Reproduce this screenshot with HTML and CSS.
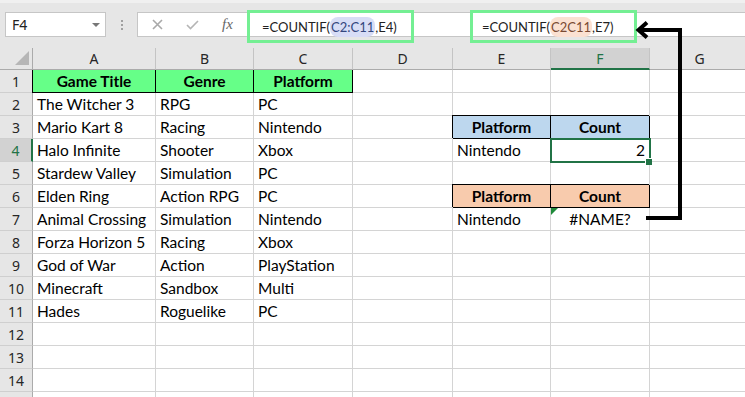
FILE: index.html
```html
<!DOCTYPE html>
<html lang="en">
<head>
  <meta charset="UTF-8" />
  <meta name="viewport" content="width=device-width, initial-scale=1.0"/>
  <title>COUNTIF - #NAME? error</title>
  <link rel="stylesheet" href="styles.css">
</head>
<body>
  <div class="window">
    <div class="toolbar">
      <div class="name-box"><span>F4</span><span class="caret"></span></div>
      <div class="grip"><i></i><i></i><i></i></div>
      <div class="formula-bar">
        <span class="fb-btn cancel">
          <svg width="11" height="11" viewBox="0 0 11 11"><path d="M1 1L10 10M10 1L1 10" /></svg>
        </span>
        <span class="fb-btn enter">
          <svg width="13" height="10" viewBox="0 0 13 10"><path d="M1 5L4.5 8.5L12 1" /></svg>
        </span>
        <span class="fb-btn fx">fx</span>
        <span class="callout">=COUNTIF(<span class="ref ref-blue">C2:C11</span>,E4)</span>
        <span class="callout callout-wrong">=COUNTIF(<span class="ref ref-orange">C2C11</span>,E7)</span>
      </div>
    </div>

    <div class="sheet">
      <div class="row head">
        <div class="corner"></div>
        <div class="col-h">A</div>
        <div class="col-h">B</div>
        <div class="col-h">C</div>
        <div class="col-h">D</div>
        <div class="col-h">E</div>
        <div class="col-h sel">F</div>
        <div class="col-h">G</div>
      </div>
      <div class="row">
        <div class="row-h">1</div>
        <div class="cell th green">Game Title</div>
        <div class="cell th green">Genre</div>
        <div class="cell th green">Platform</div>
        <div class="cell"></div><div class="cell"></div><div class="cell"></div><div class="cell"></div>
      </div>
      <div class="row">
        <div class="row-h">2</div>
        <div class="cell">The Witcher 3</div>
        <div class="cell">RPG</div>
        <div class="cell">PC</div>
        <div class="cell"></div><div class="cell"></div><div class="cell"></div><div class="cell"></div>
      </div>
      <div class="row">
        <div class="row-h">3</div>
        <div class="cell">Mario Kart 8</div>
        <div class="cell">Racing</div>
        <div class="cell">Nintendo</div>
        <div class="cell"></div>
        <div class="cell th blue">Platform</div>
        <div class="cell th blue">Count</div>
        <div class="cell"></div>
      </div>
      <div class="row">
        <div class="row-h sel">4</div>
        <div class="cell">Halo Infinite</div>
        <div class="cell">Shooter</div>
        <div class="cell">Xbox</div>
        <div class="cell"></div>
        <div class="cell">Nintendo</div>
        <div class="cell num active">2</div>
        <div class="cell"></div>
      </div>
      <div class="row">
        <div class="row-h">5</div>
        <div class="cell">Stardew Valley</div>
        <div class="cell">Simulation</div>
        <div class="cell">PC</div>
        <div class="cell"></div><div class="cell"></div><div class="cell"></div><div class="cell"></div>
      </div>
      <div class="row">
        <div class="row-h">6</div>
        <div class="cell">Elden Ring</div>
        <div class="cell">Action RPG</div>
        <div class="cell">PC</div>
        <div class="cell"></div>
        <div class="cell th peach">Platform</div>
        <div class="cell th peach">Count</div>
        <div class="cell"></div>
      </div>
      <div class="row">
        <div class="row-h">7</div>
        <div class="cell">Animal Crossing</div>
        <div class="cell">Simulation</div>
        <div class="cell">Nintendo</div>
        <div class="cell"></div>
        <div class="cell">Nintendo</div>
        <div class="cell error">#NAME?</div>
        <div class="cell"></div>
      </div>
      <div class="row">
        <div class="row-h">8</div>
        <div class="cell">Forza Horizon 5</div>
        <div class="cell">Racing</div>
        <div class="cell">Xbox</div>
        <div class="cell"></div><div class="cell"></div><div class="cell"></div><div class="cell"></div>
      </div>
      <div class="row">
        <div class="row-h">9</div>
        <div class="cell">God of War</div>
        <div class="cell">Action</div>
        <div class="cell">PlayStation</div>
        <div class="cell"></div><div class="cell"></div><div class="cell"></div><div class="cell"></div>
      </div>
      <div class="row">
        <div class="row-h">10</div>
        <div class="cell">Minecraft</div>
        <div class="cell">Sandbox</div>
        <div class="cell">Multi</div>
        <div class="cell"></div><div class="cell"></div><div class="cell"></div><div class="cell"></div>
      </div>
      <div class="row">
        <div class="row-h">11</div>
        <div class="cell">Hades</div>
        <div class="cell">Roguelike</div>
        <div class="cell">PC</div>
        <div class="cell"></div><div class="cell"></div><div class="cell"></div><div class="cell"></div>
      </div>
      <div class="row">
        <div class="row-h">12</div>
        <div class="cell"></div><div class="cell"></div><div class="cell"></div><div class="cell"></div>
        <div class="cell"></div><div class="cell"></div><div class="cell"></div>
      </div>
      <div class="row">
        <div class="row-h">13</div>
        <div class="cell"></div><div class="cell"></div><div class="cell"></div><div class="cell"></div>
        <div class="cell"></div><div class="cell"></div><div class="cell"></div>
      </div>
      <div class="row">
        <div class="row-h">14</div>
        <div class="cell"></div><div class="cell"></div><div class="cell"></div><div class="cell"></div>
        <div class="cell"></div><div class="cell"></div><div class="cell"></div>
      </div>
      <!-- row 15 is cut off by the window edge -->
      <div class="row">
        <div class="row-h"></div>
        <div class="cell"></div><div class="cell"></div><div class="cell"></div><div class="cell"></div>
        <div class="cell"></div><div class="cell"></div><div class="cell"></div>
      </div>
    </div>

    <!-- callout arrow from the wrong formula down to F7 -->
    <svg class="arrow" width="745" height="397" viewBox="0 0 745 397">
      <path d="M646 218H680V30H639" />
      <path d="M647 22.5L638.5 30L647 37.5" />
    </svg>
  </div>
</body>
</html>
```

FILE: styles.css
```css
:root {
  --chrome: #e6e6e6;
  --chrome-line: #ababab;
  --grid: #d4d4d4;
  --excel-green: #217346;
  --callout: #74ef93;
  --hdr-green: #66ff88;
  --hdr-blue: #bdd7ee;
  --hdr-peach: #f8cbad;
}

* {
  box-sizing: border-box;
  margin: 0;
  padding: 0;
}

body {
  background: #fff;
  font-family: Lato, sans-serif;
  color: #000;
}

.window {
  position: relative;
  width: 745px;
  height: 397px;
  overflow: hidden;
}

/* name box + formula bar */
.toolbar {
  height: 48px;
  background: var(--chrome);
  border-top: 3px solid #f0f0f0;
  display: flex;
  align-items: flex-start;
  padding: 9px 0 0 5px;
}

.name-box {
  width: 101px;
  height: 25px;
  background: #fff;
  border: 1px solid #c6c6c6;
  display: flex;
  align-items: center;
  justify-content: space-between;
  padding: 0 5px 0 6px;
  font-family: "Noto Sans", sans-serif;
  font-size: 14px;
  color: #222;
}

.caret {
  width: 0;
  height: 0;
  border-left: 4px solid transparent;
  border-right: 4px solid transparent;
  border-top: 4px solid #777;
}

.grip {
  width: 31px;
  height: 25px;
  display: flex;
  flex-direction: column;
  align-items: center;
  justify-content: center;
  gap: 2px;
}

.grip i {
  width: 2px;
  height: 2px;
  background: #a0a0a0;
}

.formula-bar {
  flex: 1;
  height: 25px;
  background: #fff;
  border: 1px solid #c6c6c6;
  border-right: none;
  display: flex;
  align-items: center;
}

.fb-btn {
  height: 23px;
  display: flex;
  align-items: center;
  justify-content: center;
}

.fb-btn svg path {
  fill: none;
  stroke-width: 1.6;
}

.cancel {
  width: 38px;
}

.cancel path {
  stroke: #a9a9a9;
}

.enter {
  width: 32px;
}

.enter path {
  stroke: #b5b5b5;
  stroke-width: 2.2;
}

.fx {
  width: 39px;
  font-family: "Liberation Serif", serif;
  font-style: italic;
  font-size: 15px;
  color: #666;
}

.callout {
  flex: none;
  width: 167px;
  height: 33px;
  margin-top: 4px;
  border: 3px solid var(--callout);
  display: flex;
  align-items: center;
  padding: 1px 0 0 12px;
  font-size: 13px;
  color: #222;
  white-space: nowrap;
}

.callout-wrong {
  margin-left: 56px;
  padding-left: 9px;
}

.ref {
  padding: 2px 1px;
  border-radius: 8px;
}

.ref-blue {
  background: #d8ddf6;
  color: #34477e;
}

.ref-orange {
  background: #fbe1d2;
  color: #7a4a33;
}

/* worksheet */
.row {
  display: grid;
  grid-template-columns: 33px 123px 98px 99px 100px 98px 99px 100px;
  height: 23px;
}

.row.head {
  height: 22px;
}

.corner,
.col-h,
.row-h {
  background: var(--chrome);
  font-family: "Noto Sans", sans-serif;
  font-size: 14px;
  color: #262626;
  display: flex;
  align-items: center;
  justify-content: center;
}

.corner {
  position: relative;
  border-right: 1px solid var(--chrome-line);
  border-bottom: 1px solid var(--chrome-line);
}

.corner::after {
  content: "";
  position: absolute;
  right: 3px;
  bottom: 4px;
  border-left: 14px solid transparent;
  border-bottom: 14px solid #b6b6b6;
}

.col-h {
  border-right: 1px solid #c4c4c4;
  border-bottom: 1px solid var(--chrome-line);
}

.row-h {
  border-right: 1px solid var(--chrome-line);
  border-bottom: 1px solid #cfcfcf;
}

.col-h.sel {
  background: #d2d2d2;
  color: var(--excel-green);
  border-bottom: 2px solid var(--excel-green);
}

.row-h.sel {
  background: #d2d2d2;
  color: var(--excel-green);
  border-right: 2px solid var(--excel-green);
}

.cell {
  border-right: 1px solid var(--grid);
  border-bottom: 1px solid var(--grid);
  display: flex;
  align-items: flex-end;
  padding: 0 4px 2px;
  font-size: 15.5px;
  white-space: nowrap;
  overflow: hidden;
}

.cell.th {
  justify-content: center;
  font-weight: bold;
  border-color: #000;
  box-shadow: -1px -1px 0 #000;
}

.cell.green {
  background: var(--hdr-green);
  box-shadow: -1px 0 0 #000;
}

.cell.blue {
  background: var(--hdr-blue);
}

.cell.peach {
  background: var(--hdr-peach);
}

.cell.num {
  justify-content: flex-end;
}

.cell.active {
  position: relative;
  overflow: visible;
  outline: 2px solid var(--excel-green);
  outline-offset: -1px;
}

.cell.active::after {
  content: "";
  position: absolute;
  right: -3px;
  bottom: -4px;
  width: 6px;
  height: 6px;
  background: var(--excel-green);
  box-shadow: -1px -1px 0 #fff;
}

.cell.error {
  position: relative;
  justify-content: center;
}

.cell.error::before {
  content: "";
  position: absolute;
  left: 0;
  top: 0;
  border-top: 7px solid #1f8a3a;
  border-right: 7px solid transparent;
}

.arrow {
  position: absolute;
  left: 0;
  top: 0;
  pointer-events: none;
}

.arrow path {
  fill: none;
  stroke: #000;
  stroke-width: 4;
}
```
